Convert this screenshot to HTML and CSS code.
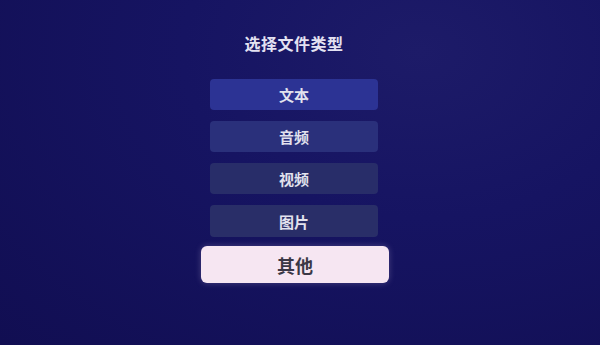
FILE: index.html
```html
<!DOCTYPE html>
<html lang="zh-CN">
<head>
    <meta charset="UTF-8">
    <meta name="viewport" content="width=device-width, initial-scale=1.0">
    <title>选择文件类型</title>
    <link rel="stylesheet" href="styles.css">
</head>
<body>
    <div class="dialog">
        <h1 class="title">选择文件类型</h1>
        <ul class="options">
            <li class="option option-1">文本</li>
            <li class="option option-2">音频</li>
            <li class="option option-3">视频</li>
            <li class="option option-4">图片</li>
            <li class="option selected">其他</li>
        </ul>
    </div>
</body>
</html>
```

FILE: styles.css
```css
html, body {
    height: 100%;
}
body {
    margin: 0;
    padding: 0;
    font-family: "Noto Sans CJK SC", "Noto Sans", sans-serif;
    background: radial-gradient(ellipse at 70% 15%, #1d1b68 0%, #161462 40%, #110e52 100%);
    overflow: hidden;
}
.dialog {
    display: flex;
    flex-direction: column;
    align-items: center;
    padding: 33px 12px 0 0;
}
.title {
    margin: 0;
    font-size: 16px;
    font-weight: 700;
    line-height: 20px;
    color: #e4e2f2;
    letter-spacing: 0.5px;
}
.options {
    list-style: none;
    margin: 26px 0 0;
    padding: 0;
    display: flex;
    flex-direction: column;
    align-items: center;
    gap: 11px;
}
.option {
    width: 168px;
    height: 31px;
    display: flex;
    align-items: center;
    justify-content: center;
    border-radius: 4px;
    font-size: 15px;
    font-weight: 700;
    color: #e2e2ee;
}
.option-1 {
    background: #2c3394;
}
.option-2 {
    background: #2a307b;
}
.option-3 {
    background: #282d69;
}
.option-4 {
    background: #292e68;
    height: 32px;
}
.selected {
    width: 188px;
    height: 37px;
    margin-top: -2px;
    margin-left: 2px;
    border-radius: 6px;
    background: #f6e6f2;
    color: #3b3846;
    font-size: 18px;
    box-shadow: 0 0 6px rgba(230, 210, 240, 0.25);
}
```
